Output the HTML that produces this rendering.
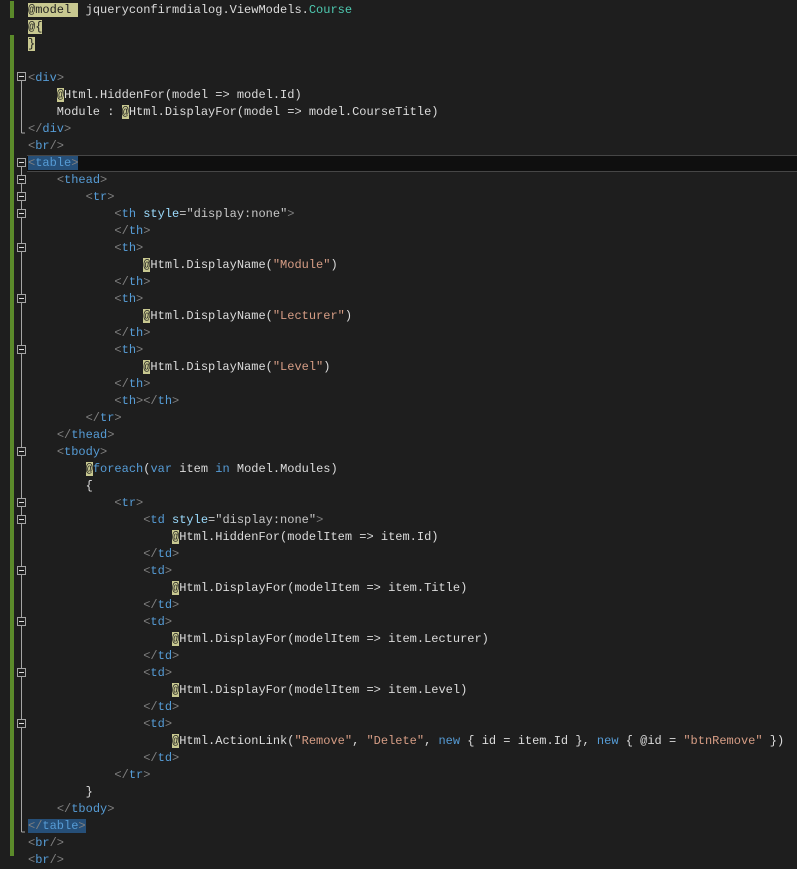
<!DOCTYPE html>
<html><head><meta charset="utf-8"><style>
body{margin:0;background:#1e1e1e;width:797px;height:856px;overflow:hidden;position:relative}
.code{position:absolute;left:28px;top:2px;margin:0;font:12px/17px "Liberation Mono",monospace;color:#dcdcdc;white-space:pre}
.p{color:#808080}.t{color:#569cd6}.a{color:#9cdcfe}.v{color:#c8c8c8}.s{color:#d69d85}.k{color:#569cd6}.c{color:#4ec9b0}
.r{background:#c8c890;color:#1e1e1e}
.sel{background:#264f78}
.cur{position:absolute;left:27px;right:0;top:155px;height:17px;background:#0f0f0f;border-top:1px solid #464646;border-bottom:1px solid #464646;box-sizing:border-box}
</style></head><body>
<div class="cur"></div>
<svg width="28" height="856" style="position:absolute;left:0;top:0">
<rect x="10" y="1" width="4" height="17" fill="#5b8a2a"/>
<rect x="10" y="35" width="4" height="821" fill="#5b8a2a"/>
<g stroke="#a5a5a5" fill="none">
<line x1="21.5" y1="75" x2="21.5" y2="133"/><line x1="21.5" y1="133" x2="25" y2="133"/>
<line x1="21.5" y1="167" x2="21.5" y2="832"/><line x1="21.5" y1="832" x2="25" y2="832"/>
</g>
<g stroke="#a5a5a5" fill="#1e1e1e">
<rect x="17.5" y="72.5" width="8" height="8"/>
<rect x="17.5" y="158.5" width="8" height="8"/>
<rect x="17.5" y="175.5" width="8" height="8"/>
<rect x="17.5" y="192.5" width="8" height="8"/>
<rect x="17.5" y="209.5" width="8" height="8"/>
<rect x="17.5" y="243.5" width="8" height="8"/>
<rect x="17.5" y="294.5" width="8" height="8"/>
<rect x="17.5" y="345.5" width="8" height="8"/>
<rect x="17.5" y="447.5" width="8" height="8"/>
<rect x="17.5" y="498.5" width="8" height="8"/>
<rect x="17.5" y="515.5" width="8" height="8"/>
<rect x="17.5" y="566.5" width="8" height="8"/>
<rect x="17.5" y="617.5" width="8" height="8"/>
<rect x="17.5" y="668.5" width="8" height="8"/>
<rect x="17.5" y="719.5" width="8" height="8"/>
</g>
<g stroke="#dcdcdc">
<line x1="19" x2="24" y1="76.5" y2="76.5"/><line x1="19" x2="24" y1="162.5" y2="162.5"/><line x1="19" x2="24" y1="179.5" y2="179.5"/><line x1="19" x2="24" y1="196.5" y2="196.5"/><line x1="19" x2="24" y1="213.5" y2="213.5"/><line x1="19" x2="24" y1="247.5" y2="247.5"/><line x1="19" x2="24" y1="298.5" y2="298.5"/><line x1="19" x2="24" y1="349.5" y2="349.5"/><line x1="19" x2="24" y1="451.5" y2="451.5"/><line x1="19" x2="24" y1="502.5" y2="502.5"/><line x1="19" x2="24" y1="519.5" y2="519.5"/><line x1="19" x2="24" y1="570.5" y2="570.5"/><line x1="19" x2="24" y1="621.5" y2="621.5"/><line x1="19" x2="24" y1="672.5" y2="672.5"/><line x1="19" x2="24" y1="723.5" y2="723.5"/>
</g>
</svg>
<pre class="code"><span class="r">@model </span> jqueryconfirmdialog.ViewModels.<span class="c">Course</span>
<span class="r">@{</span>
<span class="r">}</span>

<span class="p">&lt;</span><span class="t">div</span><span class="p">&gt;</span>
    <span class="r">@</span>Html.HiddenFor(model =&gt; model.Id)
    Module : <span class="r">@</span>Html.DisplayFor(model =&gt; model.CourseTitle)
<span class="p">&lt;/</span><span class="t">div</span><span class="p">&gt;</span>
<span class="p">&lt;</span><span class="t">br</span><span class="p">/&gt;</span>
<span class="sel"><span class="p">&lt;</span><span class="t">table</span><span class="p">&gt;</span></span>
    <span class="p">&lt;</span><span class="t">thead</span><span class="p">&gt;</span>
        <span class="p">&lt;</span><span class="t">tr</span><span class="p">&gt;</span>
            <span class="p">&lt;</span><span class="t">th</span> <span class="a">style</span><span class="v">="display:none"</span><span class="p">&gt;</span>
            <span class="p">&lt;/</span><span class="t">th</span><span class="p">&gt;</span>
            <span class="p">&lt;</span><span class="t">th</span><span class="p">&gt;</span>
                <span class="r">@</span>Html.DisplayName(<span class="s">"Module"</span>)
            <span class="p">&lt;/</span><span class="t">th</span><span class="p">&gt;</span>
            <span class="p">&lt;</span><span class="t">th</span><span class="p">&gt;</span>
                <span class="r">@</span>Html.DisplayName(<span class="s">"Lecturer"</span>)
            <span class="p">&lt;/</span><span class="t">th</span><span class="p">&gt;</span>
            <span class="p">&lt;</span><span class="t">th</span><span class="p">&gt;</span>
                <span class="r">@</span>Html.DisplayName(<span class="s">"Level"</span>)
            <span class="p">&lt;/</span><span class="t">th</span><span class="p">&gt;</span>
            <span class="p">&lt;</span><span class="t">th</span><span class="p">&gt;&lt;/</span><span class="t">th</span><span class="p">&gt;</span>
        <span class="p">&lt;/</span><span class="t">tr</span><span class="p">&gt;</span>
    <span class="p">&lt;/</span><span class="t">thead</span><span class="p">&gt;</span>
    <span class="p">&lt;</span><span class="t">tbody</span><span class="p">&gt;</span>
        <span class="r">@</span><span class="k">foreach</span>(<span class="k">var</span> item <span class="k">in</span> Model.Modules)
        {
            <span class="p">&lt;</span><span class="t">tr</span><span class="p">&gt;</span>
                <span class="p">&lt;</span><span class="t">td</span> <span class="a">style</span><span class="v">="display:none"</span><span class="p">&gt;</span>
                    <span class="r">@</span>Html.HiddenFor(modelItem =&gt; item.Id)
                <span class="p">&lt;/</span><span class="t">td</span><span class="p">&gt;</span>
                <span class="p">&lt;</span><span class="t">td</span><span class="p">&gt;</span>
                    <span class="r">@</span>Html.DisplayFor(modelItem =&gt; item.Title)
                <span class="p">&lt;/</span><span class="t">td</span><span class="p">&gt;</span>
                <span class="p">&lt;</span><span class="t">td</span><span class="p">&gt;</span>
                    <span class="r">@</span>Html.DisplayFor(modelItem =&gt; item.Lecturer)
                <span class="p">&lt;/</span><span class="t">td</span><span class="p">&gt;</span>
                <span class="p">&lt;</span><span class="t">td</span><span class="p">&gt;</span>
                    <span class="r">@</span>Html.DisplayFor(modelItem =&gt; item.Level)
                <span class="p">&lt;/</span><span class="t">td</span><span class="p">&gt;</span>
                <span class="p">&lt;</span><span class="t">td</span><span class="p">&gt;</span>
                    <span class="r">@</span>Html.ActionLink(<span class="s">"Remove"</span>, <span class="s">"Delete"</span>, <span class="k">new</span> { id = item.Id }, <span class="k">new</span> { @id = <span class="s">"btnRemove"</span> })
                <span class="p">&lt;/</span><span class="t">td</span><span class="p">&gt;</span>
            <span class="p">&lt;/</span><span class="t">tr</span><span class="p">&gt;</span>
        }
    <span class="p">&lt;/</span><span class="t">tbody</span><span class="p">&gt;</span>
<span class="sel"><span class="p">&lt;/</span><span class="t">table</span><span class="p">&gt;</span></span>
<span class="p">&lt;</span><span class="t">br</span><span class="p">/&gt;</span>
<span class="p">&lt;</span><span class="t">br</span><span class="p">/&gt;</span></pre>
</body></html>
